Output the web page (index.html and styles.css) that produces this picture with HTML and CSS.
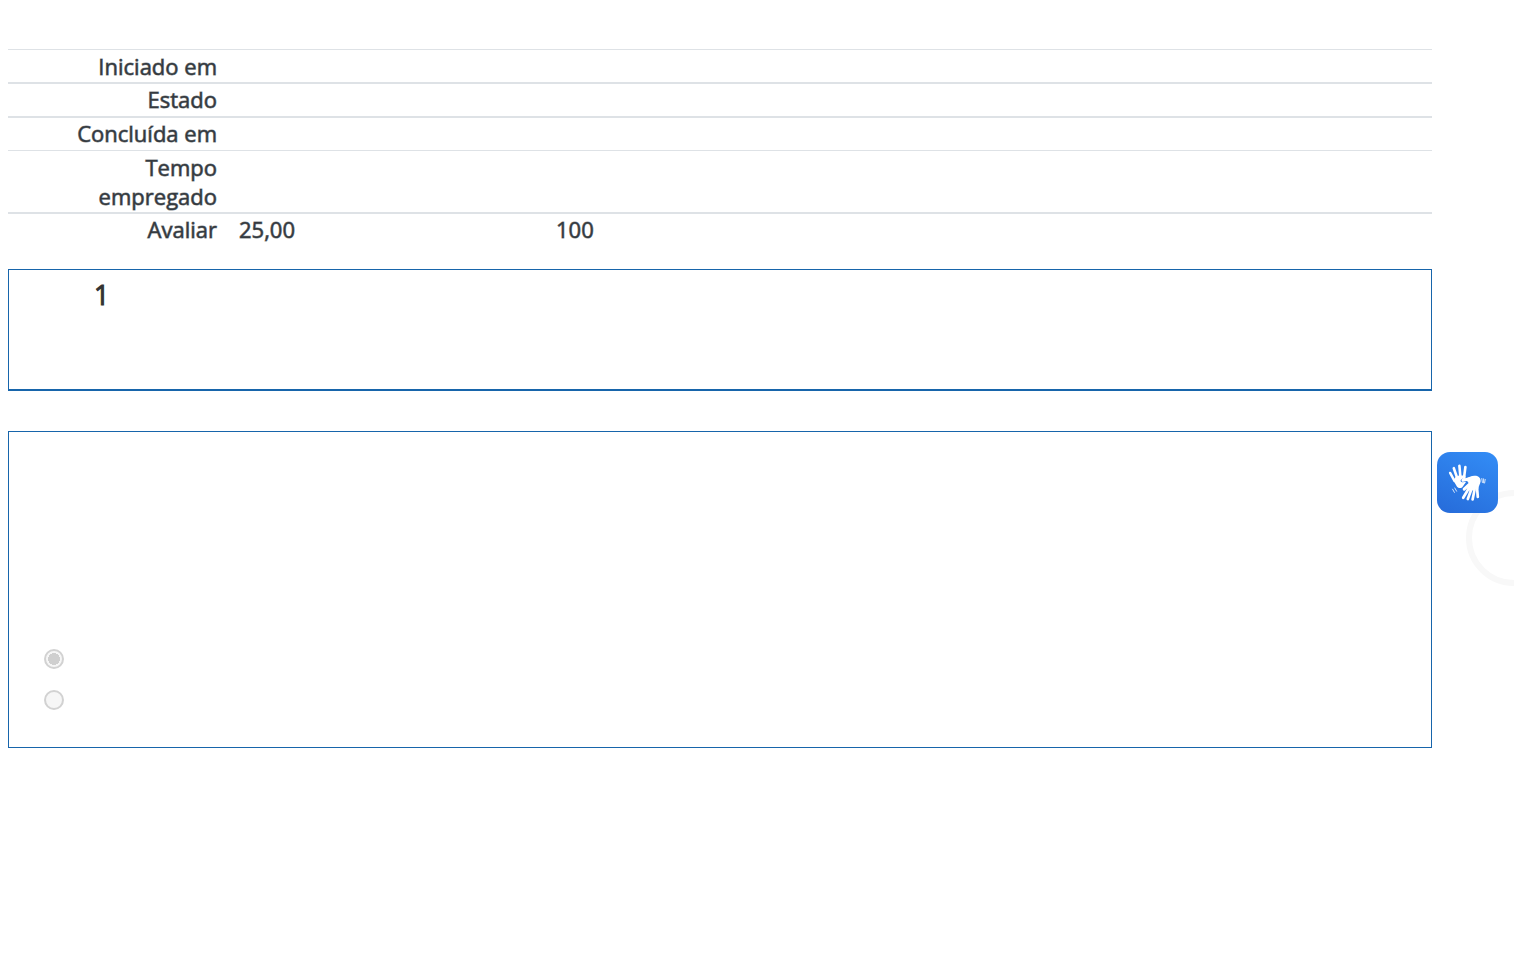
FILE: index.html
```html
<!DOCTYPE html>
<html lang="pt-BR">
<head>
<meta charset="utf-8">
<title>Revisão da tentativa</title>
<link rel="stylesheet" href="styles.css">
</head>
<body>
<main class="page">
  <table class="summary">
    <tbody>
      <tr class="thin"><th scope="row">Iniciado em</th><td></td><td></td></tr>
      <tr><th scope="row">Estado</th><td></td><td></td></tr>
      <tr><th scope="row">Concluída em</th><td></td><td></td></tr>
      <tr class="thin"><th scope="row">Tempo empregado</th><td></td><td></td></tr>
      <tr><th scope="row">Avaliar</th><td>25,00</td><td>100</td></tr>
    </tbody>
  </table>
  <section class="info">
    <h3 class="number">1</h3>
  </section>
  <section class="question">
    <div class="answers">
      <input class="answer" type="radio" name="answer" aria-label="Verdadeiro" checked disabled>
      <input class="answer" type="radio" name="answer" aria-label="Falso" disabled>
    </div>
  </section>
</main>
<aside class="access">
  <div class="ring"></div>
  <button class="sign" type="button" aria-label="Libras">
    <svg viewBox="1 1 50 50" width="50" height="50" aria-hidden="true">
      <g fill="none" stroke="#fff" stroke-linecap="round" stroke-linejoin="round">
        <path stroke-width="2.6" d="M12.5 24 8.2 16M15.2 21 11.8 11.2M18.4 20 17.4 8.8M22 21 23.4 10"/>
        <path stroke-width="2.7" d="M27 31 21.2 40.8M29.5 32 25.8 42M32.5 33 30.6 42.4M35 30 35.8 39.8"/>
        <path stroke-width="3" d="M30 21.2 21 23.3M29 25.8 22.2 32.2"/>
        <path stroke-width=".8" d="M10.6 32.2 12.4 35.4M12.8 31 14.6 34.2M39.8 21.5 40.4 25.5M41.6 21.8 41.6 25.8M43.2 22.4 42.6 26"/>
      </g>
      <path fill="#fff" d="M11.3 23.2 14 19.5 17 18.5 23.3 18.5 23.6 20.4C20.6 21.4 18.2 22.4 18.7 24.2 19.2 25.5 21 25.2 24 25L20.3 30.2C18.8 31.4 16.4 31.4 15 29.8Z"/>
      <path fill="#fff" d="M23.5 21.8C27 19.8 30.5 18.1 34 18.8 37 19.5 39 21.6 38.6 24.5 38 27.6 36.6 29 36.2 32L28 34 25.2 31.5 27.6 27.3 25.5 24.5Z"/>
    </svg>
  </button>
</aside>
</body>
</html>
```
FILE: styles.css
```css
* { box-sizing: border-box; }
body {
  margin: 0;
  background: #fff;
  color: #343a40;
  font: 400 22px/29px "Open Sans", "Noto Sans", sans-serif;
}
.page { padding: 49px 82px 0 8px; }
.summary {
  width: 100%;
  table-layout: fixed;
  border-collapse: separate;
  border-spacing: 0;
  -webkit-text-stroke: 1px #343a40a0;
}
.summary th, .summary td {
  padding: 1px 11px 2px;
  border-top: 2px solid #dee2e6;
  vertical-align: top;
  text-align: left;
  font-weight: 400;
}
.summary .thin > * { padding: 2px 11px 1px; border-top-width: 1px; }
.summary th { width: 220px; text-align: right; }
.summary .thin > th { padding-left: 40px; }
.summary td:nth-child(2) { width: 317px; }
.info {
  min-height: 122px;
  margin-top: 23px;
  padding: 8px 85px;
  border: 1px solid #1765ab;
  border-bottom-width: 2px;
}
.number {
  margin: 0;
  color: #333;
  font-size: 27px;
  line-height: 34px;
  font-weight: 400;
  -webkit-text-stroke: 1px #333;
}
.question {
  margin-top: 40px;
  padding: 217px 35px 37px;
  border: 1px solid #1765ab;
}
.answers { display: flex; flex-direction: column; gap: 21px; }
.answer {
  appearance: none;
  width: 20px;
  height: 20px;
  margin: 0;
  border: 2px solid #d2d2d2;
  border-radius: 50%;
  background: #f6f6f6;
}
.answer:checked { background: radial-gradient(circle, #cfcfcf 0 6px, #f6f6f6 6px); }
.access {
  position: fixed;
  top: 452px;
  right: 0;
  width: 82px;
  height: 140px;
  overflow: hidden;
}
.ring {
  position: absolute;
  top: 38px;
  right: -48px;
  width: 96px;
  height: 96px;
  border: 6px solid #f8f8f8;
  border-radius: 50%;
}
.sign {
  position: absolute;
  top: 0;
  right: 16px;
  display: grid;
  place-items: center;
  width: 61px;
  height: 61px;
  padding: 0;
  border: 0;
  border-radius: 13px;
  background: linear-gradient(25deg, #266bd9, #338df6);
}
```
